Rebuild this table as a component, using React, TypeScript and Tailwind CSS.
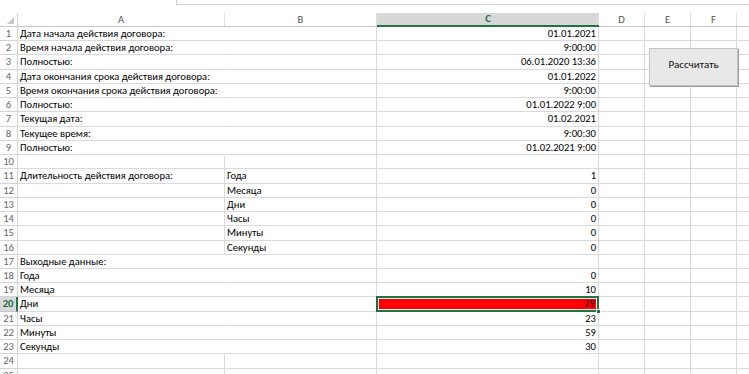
import React from "react";

type RowData = {
  a?: string;
  b?: string;
  c?: string;
  noAB?: boolean;
};

const rows: RowData[] = [
  { a: "Дата начала действия договора:", c: "01.01.2021", noAB: true },
  { a: "Время начала действия договора:", c: "9:00:00", noAB: true },
  { a: "Полностью:", c: "06.01.2020 13:36", noAB: true },
  { a: "Дата окончания срока действия договора:", c: "01.01.2022", noAB: true },
  { a: "Время окончания срока действия договора:", c: "9:00:00", noAB: true },
  { a: "Полностью:", c: "01.01.2022 9:00", noAB: true },
  { a: "Текущая дата:", c: "01.02.2021", noAB: true },
  { a: "Текущее время:", c: "9:00:30", noAB: true },
  { a: "Полностью:", c: "01.02.2021 9:00", noAB: true },
  {},
  { a: "Длительность действия договора:", b: "Года", c: "1" },
  { b: "Месяца", c: "0" },
  { b: "Дни", c: "0" },
  { b: "Часы", c: "0" },
  { b: "Минуты", c: "0" },
  { b: "Секунды", c: "0" },
  { a: "Выходные данные:", noAB: true },
  { a: "Года", c: "0", noAB: true },
  { a: "Месяца", c: "10", noAB: true },
  { a: "Дни", c: "29", noAB: true },
  { a: "Часы", c: "23", noAB: true },
  { a: "Минуты", c: "59", noAB: true },
  { a: "Секунды", c: "30", noAB: true },
  {},
  {},
];

const cell = "h-full border-b border-r border-[#dadada] shrink-0";

function Header() {
  const cols = [
    { l: "A", w: "w-[207px]" },
    { l: "B", w: "w-[152px]" },
    { l: "C", w: "w-[222px]", sel: true },
    { l: "D", w: "w-[46px]" },
    { l: "E", w: "w-[46px]" },
    { l: "F", w: "w-[46px]" },
  ];
  return (
    <div className="flex h-[14px] border-b border-[#c6c6c6]">
      <div className="w-[18px] shrink-0 border-r border-[#d4d4d4] relative">
        <svg className="absolute right-[3px] bottom-[2px]" width="7" height="7" viewBox="0 0 7 7">
          <polygon points="7,0 7,7 0,7" fill="#c8c8c8" />
        </svg>
      </div>
      {cols.map((c) =>
        c.sel ? (
          <div
            key={c.l}
            className={`${c.w} shrink-0 bg-[#d8d8d8] border-b-2 border-[#217346] -mb-px text-[#1e6b41] font-bold flex items-center justify-center text-[10.6px]`}
          >
            {c.l}
          </div>
        ) : (
          <div
            key={c.l}
            className={`${c.w} shrink-0 border-r border-[#dedede] text-[#555] flex items-center justify-center text-[10.6px]`}
          >
            {c.l}
          </div>
        )
      )}
      <div className="flex-1" />
    </div>
  );
}

function Row({ n, r }: { n: number; r: RowData }) {
  const sel = n === 20;
  return (
    <div className="flex h-[14.24px] leading-[13px]">
      <div
        className={`w-[18px] shrink-0 h-full border-b text-center text-[10.6px] ${
          sel
            ? "bg-[#d8d8d8] border-r-2 border-r-[#217346] border-b-[#c6c6c6] text-[#1e6b41] font-bold"
            : "border-r border-[#d4d4d4] text-[#666]"
        }`}
      >
        {n}
      </div>
      <div className={`${cell} w-[207px] pl-[2px] whitespace-nowrap ${r.noAB ? "border-r-transparent" : ""}`}>{r.a}</div>
      <div className={`${cell} w-[152px] pl-[2px] whitespace-nowrap`}>{r.b}</div>
      {sel ? (
        <div className={`${cell} w-[222px] relative bg-[#ff0000]`}>
          <div className="absolute -left-px -top-px -right-px -bottom-px border-2 border-[#217346] shadow-[inset_0_0_0_1px_#f3efe6]" />
          <div className="relative text-right pr-[3px] text-[#2a0000]">{r.c}</div>
          <div className="absolute -right-[3px] -bottom-[3px] w-[5px] h-[5px] bg-[#217346] border border-white" />
        </div>
      ) : (
        <div className={`${cell} w-[222px] text-right pr-[2px]`}>{r.c}</div>
      )}
      <div className={`${cell} w-[46px]`} />
      <div className={`${cell} w-[46px]`} />
      <div className={`${cell} w-[46px]`} />
      <div className="flex-1 h-full border-b border-[#dadada]" />
    </div>
  );
}

export default function App() {
  return (
    <div
      className="relative w-[749px] h-[374px] overflow-hidden bg-white text-[10.6px] text-black"
      style={{ fontFamily: 'Carlito, Calibri, "Noto Sans", "Liberation Sans", sans-serif' }}
    >
      <div className="h-[13px] flex">
        <div className="w-[176px] shrink-0" />
        <div className="flex-1 h-[5px] border-l border-b border-[#cfcfcf]" />
      </div>
      <Header />
      {rows.map((r, i) => (
        <Row key={i} n={i + 1} r={r} />
      ))}
      <button className="absolute left-[649px] top-[48px] w-[89px] h-[38px] bg-[#e8e8e8] border border-[#c4c4c4] shadow-[1px_1px_0_#9a9a9a] text-[11px] text-[#111] pb-[4px]">
        Рассчитать
      </button>
    </div>
  );
}
